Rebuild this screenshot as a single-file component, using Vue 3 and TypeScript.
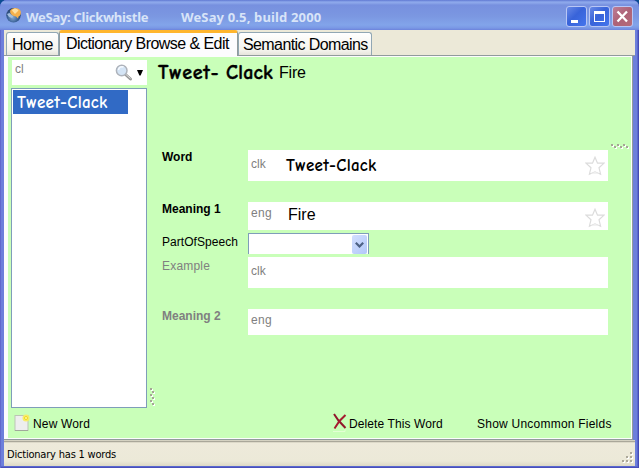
<script setup lang="ts">
import { ref } from 'vue'

interface Field {
  label: string
  lang: string
  value: string
  kind: string
}

const tabs: string[] = ['Home', 'Dictionary Browse & Edit', 'Semantic Domains']
const activeTab = ref(1)
const fields: Field[] = [
  { label: 'Word', lang: 'clk', value: 'Tweet-Clack', kind: 'word' },
  { label: 'Meaning 1', lang: 'eng', value: 'Fire', kind: 'meaning' },
  { label: 'PartOfSpeech', lang: '', value: '', kind: 'pos' },
  { label: 'Example', lang: 'clk', value: '', kind: 'example' },
  { label: 'Meaning 2', lang: 'eng', value: '', kind: 'extra' },
]
</script>

<template>
  <div class="desktop">
    <div class="window">
      <header class="titlebar">
        <svg class="globe" width="16" height="17" viewBox="0 0 16 17">
          <defs>
            <radialGradient id="globeFill" cx=".45" cy=".65" r=".6">
              <stop offset="0" stop-color="#86a8cf" /><stop offset=".6" stop-color="#3a6299" /><stop offset="1" stop-color="#243d63" />
            </radialGradient>
          </defs>
          <circle cx="7.5" cy="8.3" r="7.2" fill="url(#globeFill)" />
          <path d="M1 7l2.500-1 2 2 2 1-1.500 2-3-1z" fill="#a5bfdd" />
          <path d="M4.500 3C7 .2 12 .2 14 3c2 3 .2 6-1.500 6.400l-.5 2-2-2C6 9 3 6 4.500 3z" fill="#f5b04c" />
          <path d="M6 3.500c2-3 5-2 6.500 0L9 7z" fill="#ffe0a0" />
        </svg>
        <span class="app-name">WeSay: Clickwhistle</span>
        <span class="version">WeSay 0.5, build 2000</span>
        <div class="controls">
          <button class="ctl"><svg width="19" height="19"><path d="M4 13h7v3H4z" fill="#fff" /></svg></button>
          <button class="ctl"><svg width="19" height="19"><path d="M4 4h11v11H4zM5 7v7h9V7z" fill="#fff" fill-rule="evenodd" /></svg></button>
          <button class="ctl close"><svg width="19" height="19"><path d="M4.500 4.500l9.500 10M14 4.500l-9.500 10" stroke="#fff" stroke-width="2.300" /></svg></button>
        </div>
      </header>

      <nav class="tabs">
        <div v-for="(tab, i) in tabs" :key="tab" class="tab" :class="['tab-' + i, { active: i === activeTab }]" @click="activeTab = i">
          <span>{{ tab }}</span>
        </div>
      </nav>

      <main class="page">
        <div class="content">
          <aside class="sidebar">
            <div class="search">
              <span class="query">cl</span>
              <svg class="lens" width="18" height="18" viewBox="0 0 18 18">
                <path d="M10.500 10.500l5 4.500" stroke="#999" stroke-width="3" stroke-linecap="round" />
                <path d="M10.500 10l5 4.500" stroke="#ddd" stroke-width="1" />
                <circle cx="6.700" cy="6.500" r="5.300" fill="#d4e4f5" stroke="#aeb3bb" stroke-width="1.500" />
                <path d="M3.500 6a3.500 3.500 0 0 1 5-3" stroke="#f7fbff" stroke-width="1.500" fill="none" />
              </svg>
              <svg class="drop" width="6" height="6"><path d="M0 0h6L3.600 5.500H2.400z" /></svg>
            </div>
            <div class="list"><div class="item"><span>Tweet-Clack</span></div></div>
          </aside>
          <svg class="grip-v" width="6" height="18">
            <g v-for="n in 6" :key="n">
              <rect :x="n % 2 ? 1 : 3" :y="(n - 1) * 3 + 1" width="2" height="2" fill="#fff" />
              <rect :x="n % 2 ? 0 : 2" :y="(n - 1) * 3" width="2" height="2" fill="#a5a595" />
            </g>
          </svg>
          <section class="entry">
            <div class="preview"><b>Tweet-</b><b class="second">Clack</b><span>Fire</span></div>
            <div class="grip-row">
              <svg width="19" height="6">
                <g v-for="n in 6" :key="n">
                  <rect :x="(n - 1) * 3 + 1" :y="n % 2 ? 1 : 3" width="2" height="2" fill="#fff" />
                  <rect :x="(n - 1) * 3" :y="n % 2 ? 0 : 2" width="2" height="2" fill="#a5a595" />
                </g>
              </svg>
            </div>
            <div class="fields">
              <div v-for="f in fields" :key="f.label" class="row" :class="f.kind">
                <label><span>{{ f.label }}</span></label>
                <div v-if="f.kind === 'pos'" class="combo">
                  <div class="combo-btn"><svg width="9" height="6"><path d="M.8.800l3.700 3.700L8.200.800" fill="none" stroke="#4d6185" stroke-width="2.200" /></svg></div>
                </div>
                <div v-else class="box">
                  <span class="lang">{{ f.lang }}</span>
                  <span class="value">{{ f.value }}</span>
                  <svg v-if="f.value" class="star" width="20" height="20" viewBox="0 0 20 20">
                    <path d="M10 1.200l2.500 6h6.500l-5 4.500 1.600 6.500L10 15.800l-5.600 2.400L6 11.700 1 7.200h6.500z" fill="#fff" stroke="#dcdcdc" stroke-width="1.200" />
                    <path d="M5.500 17.800l4.500-2 4.500 2z" fill="#eee" />
                  </svg>
                </div>
              </div>
            </div>
          </section>
        </div>
        <footer class="actions">
          <svg class="new-icon" width="16" height="18" viewBox="0 0 16 18">
            <rect x="1" y="1.500" width="13" height="15" fill="#eee" stroke="#bcc5b5" />
            <path d="M1 16.500h13" stroke="#a0a99b" />
            <circle cx="12" cy="4" r="3.500" fill="#f7ed68" /><circle cx="12" cy="4" r="1.500" fill="#fffbb0" stroke="#f0d820" />
          </svg>
          <span class="new">New Word</span>
          <svg class="del-icon" width="14" height="19" viewBox="0 0 14 19">
            <path d="M0 18.500h12v-2" stroke="#e3ffd4" fill="none" />
            <path d="M1 1l4.500 6.500 7 7.500" stroke="#91172c" stroke-width="2" fill="none" />
            <path d="M12.500 2L6.500 8 1.500 15.500" stroke="#a51b30" stroke-width="2" fill="none" />
          </svg>
          <span class="del">Delete This Word</span>
          <span class="show">Show Uncommon Fields</span>
        </footer>
      </main>

      <footer class="status">
        <span>Dictionary has 1 words</span>
        <svg width="12" height="12">
          <g v-for="[x, y] in [[8, 0], [4, 4], [8, 4], [0, 8], [4, 8], [8, 8]]" :key="x + '-' + y">
            <rect :x="x + 1" :y="y + 1" width="2" height="2" fill="#fff" />
            <rect :x="x" :y="y" width="2" height="2" fill="#aca899" />
          </g>
        </svg>
      </footer>
    </div>
  </div>
</template>

<style>
body { margin: 0; overflow: hidden; }
</style>

<style scoped>
* { box-sizing: border-box; }
.desktop { width: 639px; height: 468px; background: #0b4d92; font-family: "Liberation Sans", sans-serif; color: #000; white-space: nowrap; }
svg { display: block; flex: none; }
.window { height: 468px; border-radius: 7px 7px 0 0; overflow: hidden; padding: 0 4px 4px; display: flex; flex-direction: column; background: #6d7fdb; box-shadow: inset 1px 0 #6068cc, inset -1px 0 #464bb4, inset 0 -1px #4a4fba, inset -2px -2px #5968ce; }
.titlebar { height: 30px; flex: none; margin: 0 -4px; padding: 0 6px; display: flex; align-items: flex-start; background: linear-gradient(#6078d2 0, #8ea9ec 2px, #8ba5e9 3px, #7790df 5px, #7b97e1 16px, #82a4ea 25px, #7a98e5 28px, #6c83dc 30px); color: #d8e4f8; font: bold 13px/18px "Noto Sans", sans-serif; }
.globe { margin-top: 7px; }
.app-name { margin: 8px 0 0 4px; width: 155px; letter-spacing: -.28px; }
.version { margin-top: 8px; letter-spacing: .15px; }
.controls { display: flex; gap: 2px; margin: 6px 0 0 auto; }
.ctl { width: 21px; height: 21px; padding: 0; border: 1px solid #b8c6f5; border-radius: 3px; background: linear-gradient(135deg, #6889e6, #3863d9 45%, #4475ed); }
.close { background: linear-gradient(135deg, #bd7d96, #ad6277 50%, #b56b79); }
.tabs { height: 26px; flex: none; display: flex; align-items: flex-end; background: #ece9d8; border-bottom: 1px solid #919b9c; padding-left: 2px; }
.tab { height: 23px; border: 1px solid #91a7b4; border-bottom: 0; border-radius: 3px 3px 0 0; background: linear-gradient(#fff, #f3f2eb 80%, #e6e4dc); font-size: 16px; line-height: 24px; padding-left: 5px; }
.tab-0 { width: 53px; letter-spacing: -.45px; }
.tab-1 { width: 179px; letter-spacing: -.55px; }
.tab-2 { width: 134px; letter-spacing: -.6px; padding-left: 4px; }
.tab.active { height: 26px; margin-bottom: -1px; border-top: 3px solid #ffb52d; border-color: #ffb52d #919b9c; background: #fcfcfe; padding-left: 6px; line-height: 22px; }
.page { height: 384px; flex: none; margin-right: 2px; padding: 1px 1px 1px 4px; background: #fcfcfe; border-right: 1px solid #919b9c; border-bottom: 1px solid #919b9c; display: flex; flex-direction: column; }
.content { height: 351px; display: flex; background: #c9ffb9; padding: 3px 0 0 3px; }
.sidebar { width: 136px; }
.search { height: 25px; margin-left: 1px; background: #fff; display: flex; align-items: flex-start; color: #808080; font-size: 12px; padding-left: 3px; }
.query { flex: 1; line-height: 19px; }
.lens { margin: 4px 4px 0 0; }
.drop { margin: 10px 4px 0 0; }
.list { height: 320px; margin-top: 3px; border: 1px solid #7f9db9; background: #fff; padding: 1px; }
.item { width: 115px; height: 24px; background: #316ac5; color: #fff; padding-left: 4px; font: bold 17px/25px "Comic Sans MS", "Comic Neue", Lato, sans-serif; letter-spacing: .25px; }
.grip-v { margin: 328px 0 0 3px; }
.entry { flex: 1; padding-left: 1px; }
.preview { height: 84px; display: flex; font: 16px/24px "Liberation Sans", sans-serif; letter-spacing: -.2px; }
.preview b { font: 900 20px/25px "Comic Sans MS", "Comic Neue", Lato, sans-serif; letter-spacing: .7px; width: 68px; margin-left: 1px; -webkit-text-stroke: .4px #000; }
.preview .second { width: 53px; margin-left: 0; letter-spacing: .2px; }
.preview span { line-height: 25px; }
.grip-row { height: 6px; display: flex; justify-content: flex-end; padding-right: 1px; }
.fields { padding-left: 5px; }
.row { display: grid; grid-template-columns: 86px 360px; align-items: start; font-size: 12px; }
label { line-height: 14px; }
.word { height: 52px; }
.meaning { height: 31px; }
.pos { height: 24px; }
.example { height: 52px; }
.word label, .meaning label, .extra label { font-weight: bold; }
.example label, .extra label { color: #808080; }
.example label { padding-top: 2px; letter-spacing: .2px; }
.pos label { padding-top: 2px; letter-spacing: .05px; }
.box { background: #fff; display: flex; align-items: flex-start; height: 31px; padding-left: 3px; }
.meaning .box { height: 28px; }
.extra .box { height: 26px; }
.lang { width: 37px; color: #808080; line-height: 28px; }
.meaning .lang, .extra .lang { line-height: 23px; letter-spacing: .3px; }
.value { flex: 1; font-size: 16px; line-height: 25px; }
.word .value { font: bold 17px/31px "Comic Sans MS", "Comic Neue", Lato, sans-serif; letter-spacing: .25px; margin-left: -2px; }
.star { margin: 6px 3px 0 0; }
.combo { width: 121px; height: 21px; border: 1px solid #7f9db9; border-bottom: 0; background: #fff; display: flex; justify-content: flex-end; padding: 1px 1px 0; }
.combo-btn { width: 15px; height: 19px; border-radius: 2px; background: linear-gradient(135deg, #d2deff, #b2c8f8); display: flex; align-items: center; justify-content: center; }
.actions { height: 30px; background: #c9ffb9; display: flex; align-items: flex-start; padding-left: 6px; font-size: 12px; line-height: 16px; }
.new-icon { margin-top: 6px; }
.new { width: 303px; padding: 8px 0 0 3px; letter-spacing: .15px; }
.del-icon { margin-top: 5px; }
.del { width: 130px; padding: 8px 0 0 2px; letter-spacing: .1px; }
.show { padding-top: 8px; letter-spacing: .23px; }
.status { flex: 1; border-top: 1px solid #d5d2c2; box-shadow: inset 0 1px #aaa79a, inset 0 2px #ddd9c9; background: linear-gradient(#eeeadb, #ece9d8 80%, #ddd9c5); display: flex; justify-content: space-between; padding: 3px 1px 0 3px; font: 11px/22px "DejaVu Sans Condensed", sans-serif; letter-spacing: -.2px; }
.status svg { margin-top: 8px; }
</style>
